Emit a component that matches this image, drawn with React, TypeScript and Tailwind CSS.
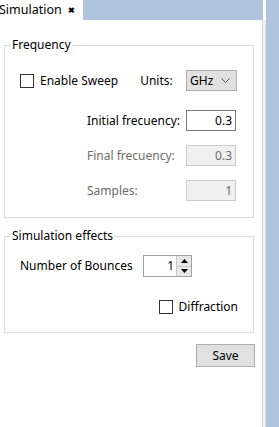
import type { ReactNode } from 'react'

const font = { fontFamily: '"Noto Sans", "Liberation Sans", sans-serif' }

const CheckBox = ({ label }: { label: string }) => (
  <label className="flex items-center h-[16px]">
    <span className="w-[14px] h-[14px] border border-[#333333] bg-white" />
    <span className="ml-[6px] text-[12px] leading-[16px] text-black">{label}</span>
  </label>
)

const Group = ({ title, children, className }: { title: string; children: ReactNode; className?: string }) => (
  <fieldset className={`mx-[4px] w-[250px] border border-[#dcdcdc] ${className ?? ''}`}>
    <legend className="ml-[6px] px-[1px] text-[12px] leading-[16px] text-black">{title}</legend>
    {children}
  </fieldset>
)

const Field = ({ label, value, disabled }: { label: string; value: string; disabled?: boolean }) => (
  <div className="flex items-center h-[21px]">
    <span
      className={`w-[99px] ml-[82px] text-[12px] leading-[16px] ${disabled ? 'text-[#6d6d6d]' : 'text-black'}`}
    >
      {label}
    </span>
    <div
      className={`w-[50px] h-[21px] border flex items-center justify-end pr-[3px] text-[12px] ${
        disabled ? 'bg-[#f0f0f0] border-[#cccccc] text-[#6d6d6d]' : 'bg-white border-[#7a7a7a] text-black'
      }`}
    >
      {value}
    </div>
  </div>
)

export default function App() {
  return (
    <div className="w-[279px] h-[427px] bg-[#b0c4de] flex overflow-hidden" style={font}>
      <div className="w-[266px] flex flex-col">
        <div className="h-[20px] flex shrink-0">
          <div className="w-[83px] bg-white flex items-center">
            <span className="ml-[-1px] text-[12.5px] leading-[20px] text-black">Simulation</span>
            <span className="ml-[6px] text-[8px] font-bold leading-[20px] text-black">✖</span>
          </div>
          <div className="flex-1" />
          <div className="w-[3px] bg-white" />
        </div>
        <div className="flex-1 flex bg-white">
          <div className="w-[262px] flex flex-col pt-[17px]">
            <Group title="Frequency" className="pb-[16px]">
              <div className="flex items-center h-[21px] mt-[17px] pl-[15px]">
                <CheckBox label="Enable Sweep" />
                <span className="ml-[22px] text-[12px] leading-[16px] text-black">Units:</span>
                <div className="ml-[auto] mr-[16px] w-[51px] h-[21px] bg-[#e1e1e1] border border-[#adadad] flex items-center pl-[3px] text-[12px] text-black">
                  GHz
                  <svg className="ml-[auto] mr-[6px]" width="9" height="6" viewBox="0 0 9 6">
                    <polyline points="0.5,0.5 4.5,4.5 8.5,0.5" fill="none" stroke="#555" strokeWidth="1" />
                  </svg>
                </div>
              </div>
              <div className="mt-[19px] flex flex-col gap-[14px]">
                <Field label="Initial frecuency:" value="0.3" />
                <Field label="Final frecuency:" value="0.3" disabled />
                <Field label="Samples:" value="1" disabled />
              </div>
            </Group>
            <Group title="Simulation effects" className="mt-[10px] pb-[17px]">
              <div className="flex items-center h-[22px] mt-[11px] pl-[15px]">
                <span className="w-[123px] text-[12px] leading-[16px] text-black">Number of Bounces</span>
                <div className="w-[49px] h-[22px] border border-[#a0a0a0] bg-white flex">
                  <span className="flex-1 text-right pr-[2px] text-[12px] leading-[20px] text-black">1</span>
                  <div className="w-[15px] flex flex-col border-l border-[#c8c8c8]">
                    <div className="flex-1 bg-[#e8e8e8] border-b border-[#c8c8c8] flex items-center justify-center">
                      <svg width="7" height="4" viewBox="0 0 7 4">
                        <polygon points="0,4 3.5,0 7,4" fill="#000" />
                      </svg>
                    </div>
                    <div className="flex-1 bg-[#e8e8e8] flex items-center justify-center">
                      <svg width="7" height="4" viewBox="0 0 7 4">
                        <polygon points="0,0 3.5,4 7,0" fill="#000" />
                      </svg>
                    </div>
                  </div>
                </div>
              </div>
              <div className="flex justify-end pr-[15px] mt-[22px]">
                <CheckBox label="Diffraction" />
              </div>
            </Group>
            <div className="flex justify-end mr-[7px] mt-[11px]">
              <button className="w-[59px] h-[23px] bg-[#e1e1e1] border border-[#adadad] text-[12px] text-black">
                Save
              </button>
            </div>
          </div>
          <div className="w-px bg-[#d4d4d4]" />
          <div className="w-[2px] bg-[#f4f4f4]" />
          <div className="w-px bg-[#e3e3e3]" />
        </div>
      </div>
    </div>
  )
}
